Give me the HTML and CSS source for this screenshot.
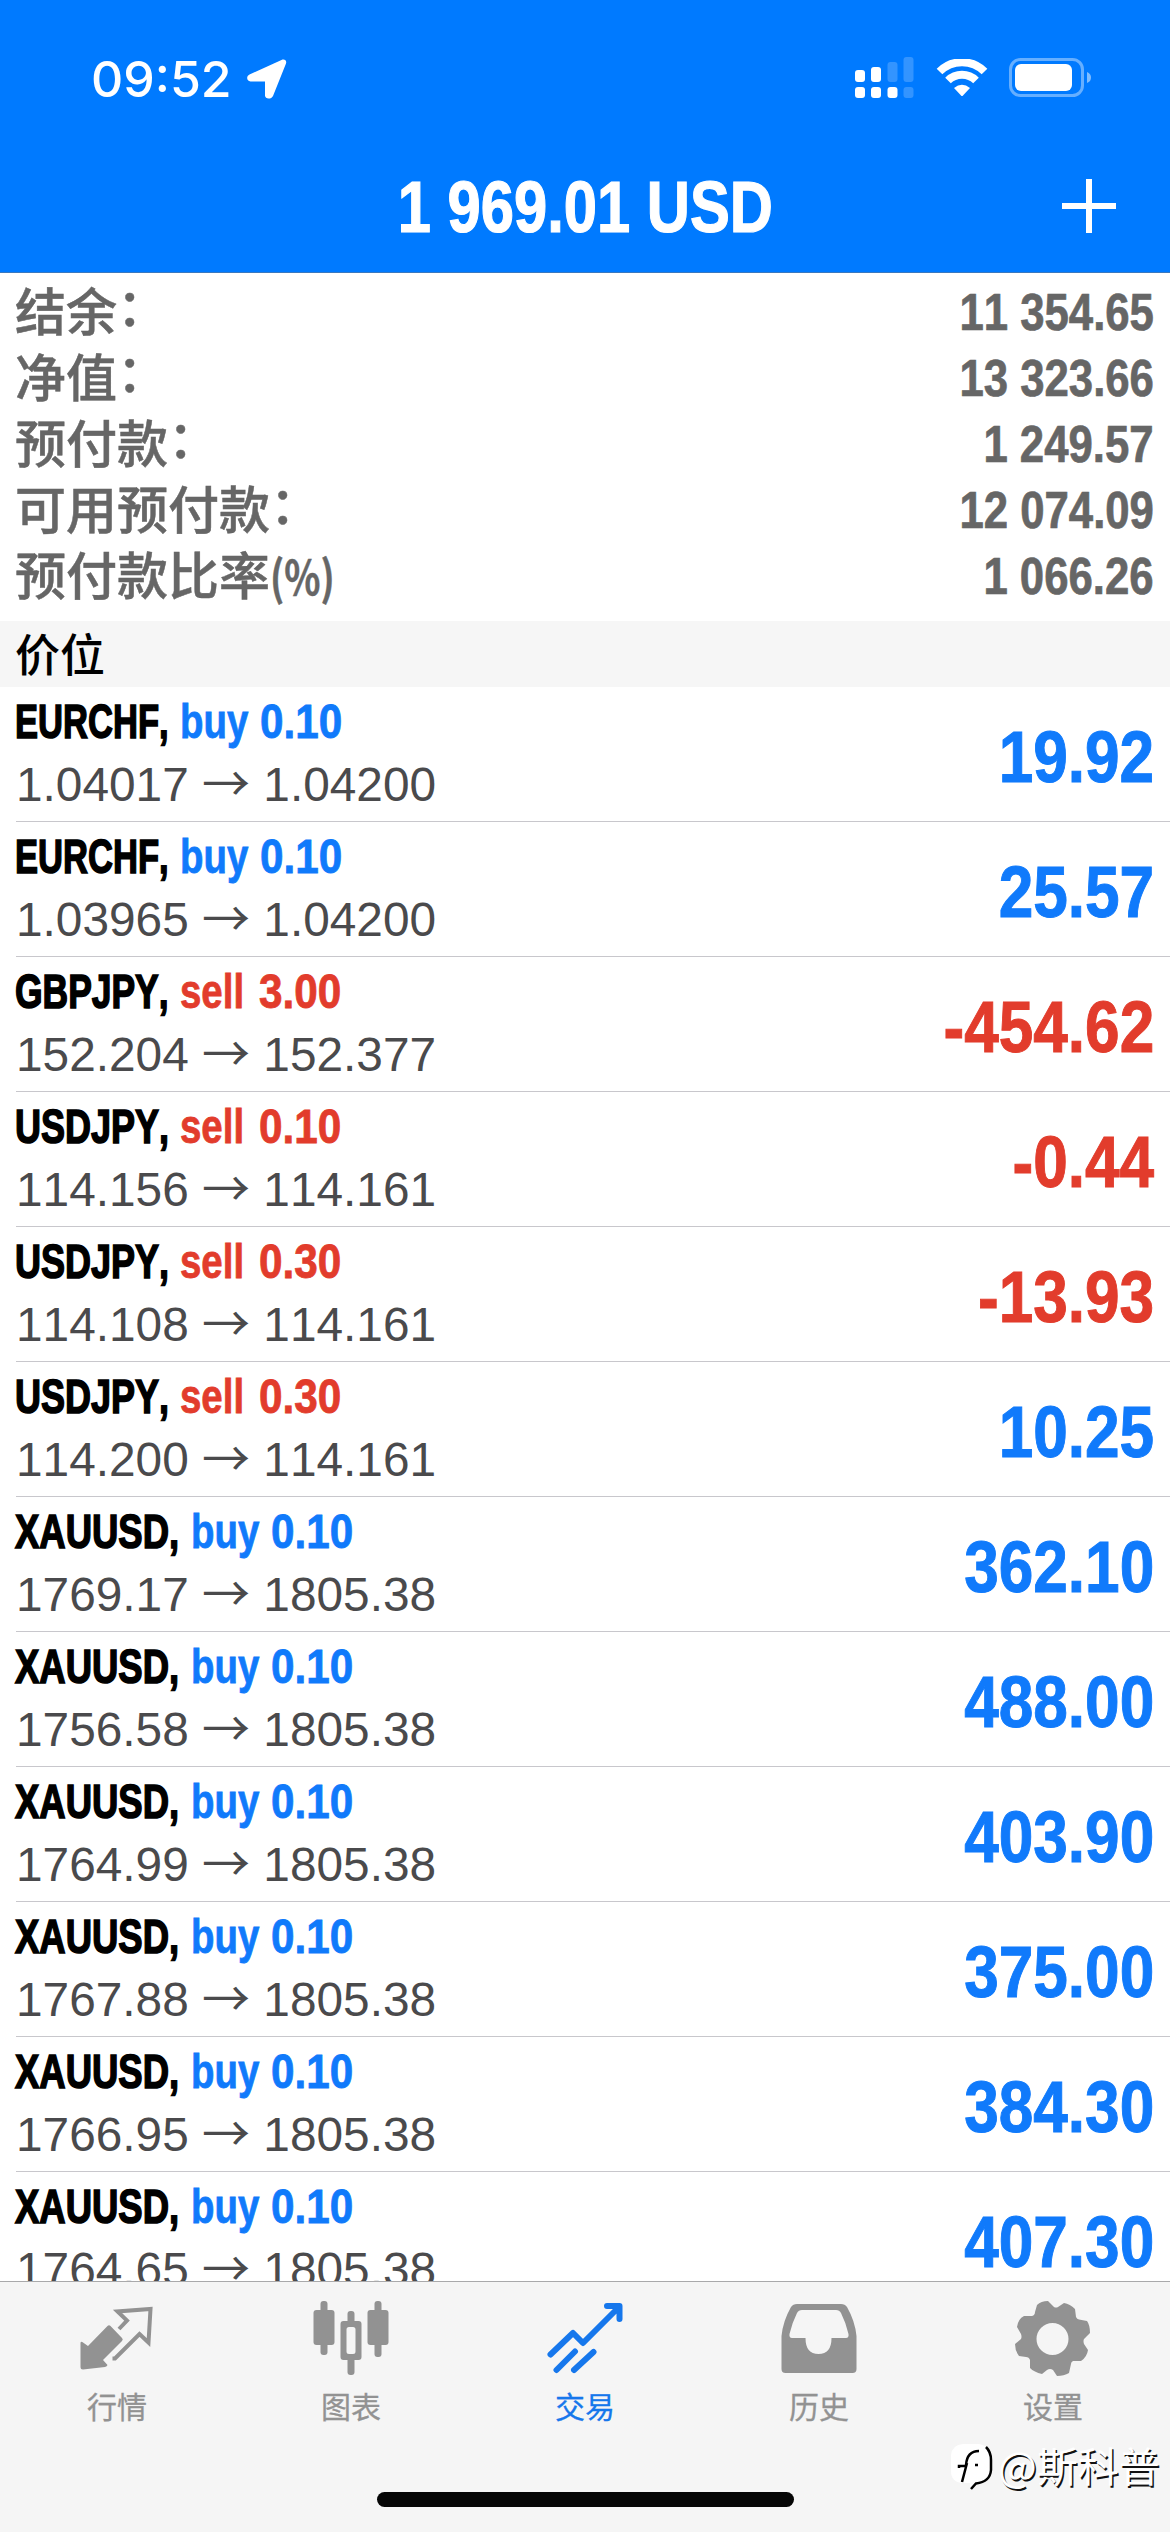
FILE: index.html
```html
<!DOCTYPE html>
<html lang="zh-CN">
<head>
<meta charset="utf-8">
<title>交易</title>
<link rel="stylesheet" href="styles.css">
</head>
<body>
<div class="app">
  <header class="header">
    <div class="status">
      <div class="clock">
        <span class="time">09:52</span>
        <svg class="location" width="40" height="40" viewBox="0 0 40 40"><path d="M34.5 1 C37.500 -.3 40 1.500 39 4.500 L26 37 C24.500 40.500 18 40.500 18 36.500 V22.500 H3.500 C-.5 22.500 -1 17 2.500 15.500 Z"/></svg>
      </div>
      <div class="indicators">
        <svg width="60" height="42" viewBox="0 0 60 42">
          <rect x="0" y="13" width="10" height="12" rx="3"/><rect x="16" y="10" width="10" height="15" rx="3"/>
          <rect class="dim" x="32.500" y="5" width="10" height="20" rx="3"/><rect class="dim" x="48.500" y="0" width="10" height="25" rx="3"/>
          <rect x="0" y="30" width="10" height="11" rx="3"/><rect x="16" y="30" width="10" height="11" rx="3"/><rect x="32.500" y="30" width="10" height="11" rx="3"/><rect class="dim" x="48.500" y="30" width="10" height="11" rx="3"/>
        </svg>
        <svg class="wifi" width="52" height="38" viewBox="0 0 52 38">
          <path class="arc" d="M3.500 12.500 A32 32 0 0 1 48.500 12.500 M12 21.500 A20 20 0 0 1 40 21.500"/>
          <path d="M18 29 Q26 22.500 34 29 L27 36.500 Q26 37.500 25 36.500 Z"/>
        </svg>
        <svg class="battery" width="84" height="40" viewBox="0 0 84 40">
          <rect class="shell" x="1.500" y="1.500" width="72" height="36" rx="10"/>
          <rect x="6" y="6" width="57" height="27" rx="6"/>
          <path class="nub" d="M78 14 Q82 15.500 82 19.500 Q82 23.500 78 25 Z"/>
        </svg>
      </div>
    </div>
    <div class="titlebar">
      <span></span>
      <h1 class="title">1 969.01 USD</h1>
      <svg class="add" width="56" height="56" viewBox="0 0 56 56"><path d="M28 1 V55 M1 28 H55"/></svg>
    </div>
  </header>

  <section class="summary">
    <div class="line"><span class="label">结余<i>：</i></span><span class="amount">11 354.65</span></div>
    <div class="line"><span class="label">净值<i>：</i></span><span class="amount">13 323.66</span></div>
    <div class="line"><span class="label">预付款<i>：</i></span><span class="amount">1 249.57</span></div>
    <div class="line"><span class="label">可用预付款<i>：</i></span><span class="amount">12 074.09</span></div>
    <div class="line"><span class="label">预付款比率<b>(%)</b></span><span class="amount">1 066.26</span></div>
  </section>

  <h2 class="section">价位</h2>

  <main class="positions">
    <div class="row"><div><div class="deal"><span class="sym eurchf">EURCHF,</span><span class="side buy">buy</span><span class="lot buy">0.10</span></div><div class="price">1.04017 <span class="to">→</span> 1.04200</div></div><span class="profit buy">19.92</span></div>
    <div class="row"><div><div class="deal"><span class="sym eurchf">EURCHF,</span><span class="side buy">buy</span><span class="lot buy">0.10</span></div><div class="price">1.03965 <span class="to">→</span> 1.04200</div></div><span class="profit buy">25.57</span></div>
    <div class="row"><div><div class="deal"><span class="sym gbpjpy">GBPJPY,</span><span class="side sell">sell</span><span class="lot sell">3.00</span></div><div class="price">152.204 <span class="to">→</span> 152.377</div></div><span class="profit sell">-454.62</span></div>
    <div class="row"><div><div class="deal"><span class="sym usdjpy">USDJPY,</span><span class="side sell">sell</span><span class="lot sell">0.10</span></div><div class="price">114.156 <span class="to">→</span> 114.161</div></div><span class="profit sell">-0.44</span></div>
    <div class="row"><div><div class="deal"><span class="sym usdjpy">USDJPY,</span><span class="side sell">sell</span><span class="lot sell">0.30</span></div><div class="price">114.108 <span class="to">→</span> 114.161</div></div><span class="profit sell">-13.93</span></div>
    <div class="row"><div><div class="deal"><span class="sym usdjpy">USDJPY,</span><span class="side sell">sell</span><span class="lot sell">0.30</span></div><div class="price">114.200 <span class="to">→</span> 114.161</div></div><span class="profit buy">10.25</span></div>
    <div class="row"><div><div class="deal"><span class="sym xauusd">XAUUSD,</span><span class="side buy">buy</span><span class="lot buy">0.10</span></div><div class="price">1769.17 <span class="to">→</span> 1805.38</div></div><span class="profit buy">362.10</span></div>
    <div class="row"><div><div class="deal"><span class="sym xauusd">XAUUSD,</span><span class="side buy">buy</span><span class="lot buy">0.10</span></div><div class="price">1756.58 <span class="to">→</span> 1805.38</div></div><span class="profit buy">488.00</span></div>
    <div class="row"><div><div class="deal"><span class="sym xauusd">XAUUSD,</span><span class="side buy">buy</span><span class="lot buy">0.10</span></div><div class="price">1764.99 <span class="to">→</span> 1805.38</div></div><span class="profit buy">403.90</span></div>
    <div class="row"><div><div class="deal"><span class="sym xauusd">XAUUSD,</span><span class="side buy">buy</span><span class="lot buy">0.10</span></div><div class="price">1767.88 <span class="to">→</span> 1805.38</div></div><span class="profit buy">375.00</span></div>
    <div class="row"><div><div class="deal"><span class="sym xauusd">XAUUSD,</span><span class="side buy">buy</span><span class="lot buy">0.10</span></div><div class="price">1766.95 <span class="to">→</span> 1805.38</div></div><span class="profit buy">384.30</span></div>
    <div class="row"><div><div class="deal"><span class="sym xauusd">XAUUSD,</span><span class="side buy">buy</span><span class="lot buy">0.10</span></div><div class="price">1764.65 <span class="to">→</span> 1805.38</div></div><span class="profit buy">407.30</span></div>
  </main>

  <footer class="footer">
    <nav class="tabs">
      <a class="tab"><svg width="76" height="76" viewBox="0 0 76 76">
        <path d="M28.500 25 Q30 23.500 31.500 25 L43 37 Q44.500 38.500 43 40 L24 59 L28.500 64 Q28 65.500 26 66 L4 68.500 Q1.500 68.500 1.500 66 V41.500 Q2.500 40 4 41.500 L9 45 Z"/>
        <path class="outline" d="M40 28 L48 19.500 L38.500 10.500 L71.500 8 L69.500 41.500 L60.500 33 L36 57.500 H33.500"/></svg><span>行情</span></a>
      <a class="tab"><svg width="76" height="76" viewBox="0 0 76 76">
        <rect x="7.500" y="0" width="7" height="54" rx="3"/><rect x="0.500" y="9" width="21" height="35" rx="3"/>
        <rect x="61.500" y="0" width="7" height="56" rx="3"/><rect x="54.500" y="9" width="21" height="35" rx="3"/>
        <rect x="34.500" y="10" width="7" height="16" rx="3"/><rect x="34.500" y="54" width="7" height="20" rx="3"/>
        <path fill-rule="evenodd" d="M30.500 20 H45.500 Q48.500 20 48.500 23 V56 Q48.500 59 45.500 59 H30.500 Q27.500 59 27.500 56 V23 Q27.500 20 30.500 20 Z M36 26 Q33.500 26 33.500 28.500 V50.500 Q33.500 53 36 53 H40 Q42.500 53 42.500 50.500 V28.500 Q42.500 26 40 26 Z"/></svg><span>图表</span></a>
      <a class="tab active"><svg width="76" height="76" viewBox="0 0 76 76"><path class="trend" d="M3.500 53.500 L26 32 L36 42 L72 6 M60 5 H72.500 V18 M28 50.500 L9.500 69 M46.500 51 L27 69"/></svg><span>交易</span></a>
      <a class="tab"><svg width="76" height="76" viewBox="0 0 76 76"><path fill-rule="evenodd" d="M16 3 H60 Q64 3 66 6 Q74 20 75.500 35 V68 Q75.500 72 71.500 72 H4.500 Q.5 72 .5 68 V35 Q2 20 10 6 Q12 3 16 3 Z M21 9 Q17.500 9 16 12 Q11 22 8.500 33 Q8 37 11 37 H24.500 Q24.500 53 37.500 53 Q50.500 53 50.500 37 H65 Q68 37 67.500 33 Q65 22 60 12 Q58.500 9 55 9 Z"/></svg><span>历史</span></a>
      <a class="tab"><svg width="76" height="76" viewBox="0 0 76 76"><path fill-rule="evenodd" d="M22 4 Q26 0 33 0 L39 6 Q41 7 43 6 L49 2 Q55 3 60 8 L61 16 Q62 18 64 18.500 L72 20 Q75 24 75 32 L69 38 Q68 40 69 43 L73 49 Q72 56 66 60 L58 60 Q56 61 56 63 L54 72 Q49 75 42 75 L38 69 Q35 67 32 69 L27 73 Q19 71 15 67 L15 59 Q14 56 11 56 L4 55 Q0 50 0 43 L6 38 Q7 36 6 33 L2 26 Q3 18 9 15 L17 15 Q20 14 20 11 Z M37.500 22 A16 16 0 1 0 37.500 54 A16 16 0 1 0 37.500 22 Z"/></svg><span>设置</span></a>
    </nav>
    <div class="home"></div>
    <div class="watermark">
      <svg width="44" height="48" viewBox="0 0 44 48"><path class="bubble" d="M13 1 H29 Q41 3 41 17 V27 Q40 39 24 40 L20 45 V40 H12 Q1 39 1 28 V12 Q2 2 13 1 Z"/><path class="mark" d="M36 4 Q41 9 41 17 V27 Q40 39 26 40.500 L21 46 M12 39 L17 20 M9 25 V23 H16 M16 22 Q17 8 29 8 M25 22 H28"/></svg>
      <span>@斯科普</span>
    </div>
  </footer>
</div>
</body>
</html>
```
FILE: styles.css
```css
* { box-sizing: border-box; margin: 0; padding: 0; }
body { width: 1170px; height: 2532px; overflow: hidden; background: #fff; font-family: "Liberation Sans", "Noto Sans CJK SC", sans-serif; }
svg { display: block; flex: none; }
.app { display: flex; flex-direction: column; width: 1170px; height: 2532px; }

.header { flex: none; height: 273px; background: #007aff; border-bottom: 1px solid #3a78be; color: #fff; }
.header svg { fill: #fff; }
.status { display: flex; justify-content: space-between; height: 140px; padding: 57px 77px 0 91px; }
.clock { display: flex; align-items: flex-start; gap: 13px; height: 42px; padding-top: 2px; }
.time { width: 143px; font: 500 50px/40px Inter, sans-serif; white-space: nowrap; }
.indicators { display: flex; gap: 21px; }
.indicators .wifi { margin-top: 2px; }
.indicators .battery { margin-top: 1px; }
.dim { fill-opacity: .2; }
.header .arc { fill: none; stroke: #fff; stroke-width: 8; }
.header .shell { fill: none; stroke: #fff; stroke-opacity: .4; stroke-width: 3; }
.header .nub { fill-opacity: .5; }
.titlebar { display: grid; grid-template-columns: 1fr auto 1fr; align-items: center; height: 132px; padding-right: 53px; padding-left: 53px; }
.title { padding-top: 2px; font-size: 73px; line-height: 84px; font-weight: 700; transform: scaleX(.818); white-space: nowrap; -webkit-text-stroke: 1.2px; }
.header .add { justify-self: end; fill: none; stroke: #fff; stroke-width: 6; }

.summary { flex: none; height: 348px; padding: 6px 16px 0 15px; color: #666; }
.line { display: flex; justify-content: space-between; height: 66px; line-height: 66px; font-size: 51px; }
.label { margin-top: -3px; font-family: "Noto Sans CJK SC", sans-serif; font-weight: 500; white-space: nowrap; -webkit-text-stroke: .5px; }
.label i { display: inline-block; font-style: normal; line-height: 40px; vertical-align: 5px; }
.label b { display: inline-block; font-size: 47px; line-height: 50px; font-weight: 700; transform: scaleX(.8); transform-origin: left; }
.amount { padding-top: 1px; font-weight: 700; font-kerning: none; transform: scaleX(.857); transform-origin: right; -webkit-text-stroke: .7px; }
.section { flex: none; height: 66px; padding-left: 15px; background: #f6f6f6; font: 500 45px/63px "Noto Sans CJK SC", sans-serif; color: #000; }

.positions { flex: 1; min-height: 0; overflow: hidden; }
.row { display: flex; justify-content: space-between; align-items: center; height: 135px; margin-left: 16px; padding-right: 16px; border-bottom: 1px solid #c8c7cc; }
.deal { display: flex; height: 62px; font-size: 48px; line-height: 62px; font-weight: 700; font-kerning: none; white-space: nowrap; -webkit-text-stroke: .8px; }
.deal span { transform-origin: left; }
.sym { width: 165px; margin-left: -1px; color: #000; -webkit-text-stroke: 1.6px; }
.eurchf { transform: scaleX(.72); }
.gbpjpy { transform: scaleX(.738); }
.usdjpy { transform: scaleX(.75); }
.xauusd { width: 176px; transform: scaleX(.76); }
.side { transform: scaleX(.8); }
.side.buy { width: 80px; }
.side.sell { width: 79px; }
.lot { width: 90px; transform: scaleX(.88); }
.price { height: 64px; font-size: 47.8px; line-height: 64px; font-kerning: none; color: #4a4a4c; white-space: nowrap; }
.to { display: inline-block; width: 48px; font: 400 48px/48px "Noto Sans CJK SC", sans-serif; text-align: center; }
.profit { padding-top: 5px; font-size: 72px; line-height: 80px; font-weight: 700; font-kerning: none; transform: scaleX(.863); transform-origin: right; -webkit-text-stroke: 1px; }
.buy { color: #107afb; }
.sell { color: #e23c2c; }

.footer { position: relative; flex: none; height: 251px; background: #f5f5f5; border-top: 1px solid #a9a9ab; }
.tabs { display: grid; grid-template-columns: repeat(5, 1fr); }
.tab { display: flex; flex-direction: column; align-items: center; padding-top: 19px; color: #929292; }
.tab svg { fill: currentColor; }
.tab span { margin-top: 6px; font: 400 30px/44px "Noto Sans CJK SC", sans-serif; -webkit-text-stroke: .3px; }
.tab .outline { fill: none; stroke: currentColor; stroke-width: 4; }
.tab .trend { fill: none; stroke: currentColor; stroke-width: 6; stroke-linecap: round; stroke-linejoin: round; }
.active { color: #1677ec; }
.home { width: 417px; height: 15px; margin: 65px auto 0; border-radius: 8px; background: #060606; }
.watermark { position: absolute; top: 161px; left: 950px; display: flex; align-items: center; gap: 4px; color: #fff; }
.watermark span { margin-top: -6px; font: 400 41px/44px "Noto Sans CJK SC", sans-serif; text-shadow: 1.5px 1.5px 0 #111; white-space: nowrap; }
.bubble { fill: #fff; }
.mark { fill: none; stroke: #000; stroke-width: 2.5; }
```
